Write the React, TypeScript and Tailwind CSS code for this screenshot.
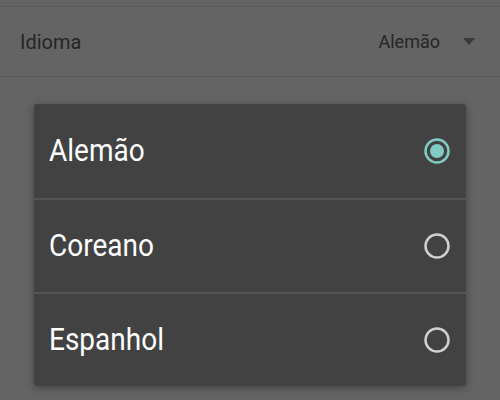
const options = ["Alemão", "Coreano", "Espanhol"];

export default function App() {
  const selected = "Alemão";

  return (
    <div
      className="relative h-[400px] w-[500px] overflow-hidden bg-[#646464]"
      style={{ fontFamily: "Roboto, 'Noto Sans', sans-serif" }}
    >
      <div className="h-[7px] border-b border-[#5a5a5a]" />
      <div className="flex h-[70px] items-center border-b border-[#595959] pl-5 pr-[25px]">
        <span className="flex-1 text-[20px] text-[#262626]">Idioma</span>
        <span className="text-[18px] text-[#262626]">Alemão</span>
        <svg className="ml-[23px]" width="12" height="7" viewBox="0 0 12 7">
          <path d="M0 0h12L6 7z" fill="#3a3a3a" />
        </svg>
      </div>

      <div className="absolute left-[34px] top-[104px] w-[432px] overflow-hidden rounded-[3px] bg-[#424242] shadow-[0_2px_8px_rgba(0,0,0,0.35)]">
        {options.map((opt, idx) => (
          <div
            key={opt}
            className={
              "flex h-[94px] items-center pl-[15px] pr-[16px] " +
              (idx > 0 ? "border-t-2 border-[#555555]" : "")
            }
          >
            <span className="flex-1">
              <span className="inline-block scale-y-[1.15] text-[28px] text-white">{opt}</span>
            </span>
            {opt === selected ? (
              <svg width="26" height="26" viewBox="0 0 26 26">
                <circle cx="13" cy="13" r="11.5" fill="none" stroke="#80cbc4" strokeWidth="2.5" />
                <circle cx="13" cy="13" r="7" fill="#80cbc4" />
              </svg>
            ) : (
              <svg width="26" height="26" viewBox="0 0 26 26">
                <circle cx="13" cy="13" r="11.5" fill="none" stroke="#d0d0d0" strokeWidth="2.5" />
              </svg>
            )}
          </div>
        ))}
      </div>
    </div>
  );
}
